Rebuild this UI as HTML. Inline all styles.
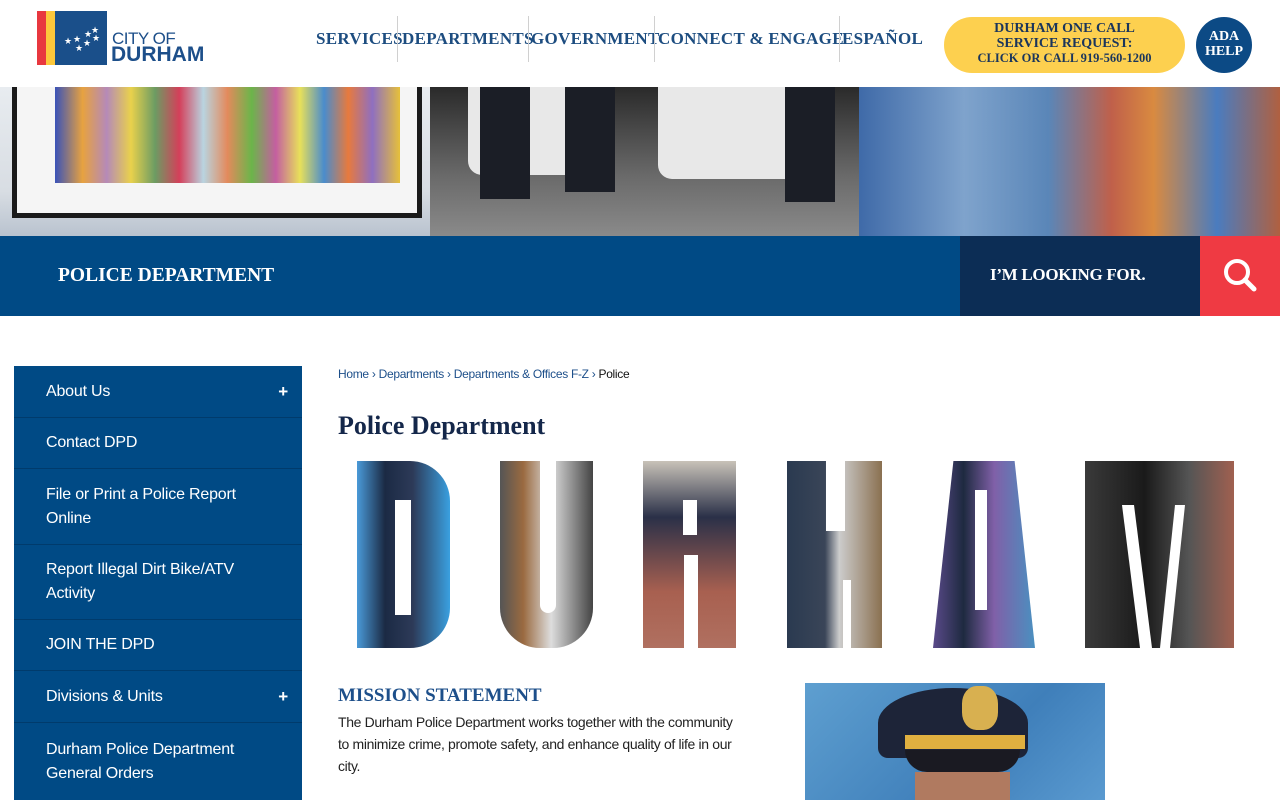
<!DOCTYPE html>
<html><head><meta charset="utf-8">
<style>
*{margin:0;padding:0;box-sizing:border-box}
body{width:1280px;height:800px;overflow:hidden;background:#fff;font-family:"Liberation Sans",sans-serif;position:relative}
.abs{position:absolute}
.nav{font-family:"Liberation Serif",serif;font-weight:bold;color:#1d4d80;font-size:17px;top:29px;letter-spacing:.3px}
.sep{top:16px;width:1px;height:46px;background:#d0d0d0}
.side{position:absolute;left:14px;top:366px;width:288px;background:#004a85}
.side div{color:#fff;font-size:16px;line-height:24px;padding:0 0 0 32px;border-bottom:1px solid #003b6c;display:flex;align-items:center;position:relative;letter-spacing:-.2px}
.side div b{position:absolute;right:14px;font-size:17px}
.L{position:absolute;top:461px;height:187px}
.w{position:absolute;background:#fff}
</style></head><body>
<!-- header -->
<div class="abs" style="left:37px;top:11px;width:9px;height:54px;background:#e8383f"></div>
<div class="abs" style="left:46px;top:11px;width:9px;height:54px;background:#fcc83c"></div>
<div class="abs" style="left:55px;top:11px;width:52px;height:54px;background:#1a4f8a"></div>
<svg class="abs" style="left:55px;top:11px" width="52" height="54" viewBox="0 0 52 54" fill="#fff">
<text x="36" y="22" font-size="9">★</text><text x="29" y="26" font-size="9">★</text><text x="37" y="30" font-size="9">★</text>
<text x="9" y="33" font-size="9">★</text><text x="18" y="31" font-size="9">★</text><text x="28" y="35" font-size="9">★</text><text x="20" y="40" font-size="9">★</text>
</svg>
<div class="abs" style="left:112px;top:31px;color:#1d4f8a;font-size:17px;letter-spacing:-.5px;line-height:16px">CITY OF</div>
<div class="abs" style="left:111px;top:45px;color:#1d4f8a;font-size:21px;font-weight:bold;letter-spacing:0;line-height:20px">DURHAM</div>
<div class="abs nav" style="left:316px">SERVICES</div>
<div class="abs sep" style="left:397px"></div>
<div class="abs nav" style="left:402px">DEPARTMENTS</div>
<div class="abs sep" style="left:528px"></div>
<div class="abs nav" style="left:531px">GOVERNMENT</div>
<div class="abs sep" style="left:654px"></div>
<div class="abs nav" style="left:658px">CONNECT &amp; ENGAGE</div>
<div class="abs sep" style="left:839px"></div>
<div class="abs nav" style="left:842px">ESPAÑOL</div>
<div class="abs" style="left:944px;top:17px;width:241px;height:56px;border-radius:28px;background:#fdd04f;color:#1a355c;font-family:'Liberation Serif',serif;font-weight:bold;text-align:center;font-size:14px;line-height:15px;padding-top:4px">DURHAM ONE CALL<br>SERVICE REQUEST:<br><span style="font-size:12.5px">CLICK OR CALL 919-560-1200</span></div>
<div class="abs" style="left:1196px;top:17px;width:56px;height:56px;border-radius:50%;background:#0c4a85;color:#fff;font-family:'Liberation Serif',serif;font-weight:bold;font-size:14px;line-height:15px;text-align:center;padding-top:12px">ADA<br>HELP</div>
<!-- hero -->
<div class="abs" style="left:0;top:87px;width:430px;height:149px;background:linear-gradient(180deg,#e8ecf0,#d8dde3 70%,#b9c3cf)"></div>
<div class="abs" style="left:12px;top:87px;width:410px;height:131px;background:#1a1a1a"></div>
<div class="abs" style="left:17px;top:87px;width:400px;height:126px;background:#f5f5f5"></div>
<div class="abs" style="left:55px;top:87px;width:345px;height:96px;background:linear-gradient(90deg,#3a52b8,#e7a240 8%,#b58ab8 15%,#e9d14c 22%,#6c9c63 29%,#d43f5a 36%,#b9d4e0 43%,#e38a5c 50%,#6bb54a 57%,#c45fa0 64%,#e8e05a 71%,#4a8ccc 78%,#e77a3e 85%,#8f6fc0 92%,#e6c03a)"></div>
<div class="abs" style="left:430px;top:87px;width:429px;height:149px;background:linear-gradient(180deg,#2a2a2a 0%,#555 40%,#6a6a6a 60%,#8a8a8a 100%)"></div>
<div class="abs" style="left:468px;top:87px;width:120px;height:88px;background:#e8e8e8;border-radius:0 0 14px 14px"></div>
<div class="abs" style="left:658px;top:87px;width:145px;height:92px;background:#e8e8e8;border-radius:0 0 14px 14px"></div>
<div class="abs" style="left:480px;top:87px;width:50px;height:112px;background:#1b1e26"></div>
<div class="abs" style="left:565px;top:87px;width:50px;height:105px;background:#1b1e26"></div>
<div class="abs" style="left:785px;top:87px;width:50px;height:115px;background:#1b1e26"></div>
<div class="abs" style="left:859px;top:87px;width:421px;height:149px;background:linear-gradient(90deg,#3f6aa8,#7fa3cc 25%,#5a86b8 45%,#c0604a 60%,#d98a40 70%,#4a7cbf 85%,#b06040)"></div>
<!-- banner -->
<div class="abs" style="left:0;top:236px;width:960px;height:80px;background:#004a85"></div>
<div class="abs" style="left:58px;top:265px;color:#fff;font-family:'Liberation Serif',serif;font-weight:bold;font-size:19.5px">POLICE DEPARTMENT</div>
<div class="abs" style="left:960px;top:236px;width:240px;height:80px;background:#0c2d55"></div>
<div class="abs" style="left:990px;top:265px;color:#fff;font-family:'Liberation Serif',serif;font-weight:bold;font-size:17px;letter-spacing:-.3px">I’M LOOKING FOR.</div>
<div class="abs" style="left:1200px;top:236px;width:80px;height:80px;background:#ef3a43"></div>
<svg class="abs" style="left:1220px;top:256px" width="40" height="40" viewBox="0 0 40 40"><circle cx="17" cy="16" r="11" fill="none" stroke="#fff" stroke-width="4"/><path d="M25 24 L34 33" stroke="#fff" stroke-width="5" stroke-linecap="round"/></svg>
<!-- sidebar -->
<div class="side">
<div style="height:52px">About Us<b>+</b></div>
<div style="height:51px">Contact DPD</div>
<div style="height:76px">File or Print a Police Report<br>Online</div>
<div style="height:75px">Report Illegal Dirt Bike/ATV<br>Activity</div>
<div style="height:51px">JOIN THE DPD</div>
<div style="height:52px">Divisions &amp; Units<b>+</b></div>
<div style="height:77px;border:none">Durham Police Department<br>General Orders</div>
</div>
<!-- content -->
<div class="abs" style="left:338px;top:367px;font-size:12px;color:#1d4f8a;letter-spacing:-.3px">Home › Departments › Departments &amp; Offices F-Z › <span style="color:#111">Police</span></div>
<div class="abs" style="left:338px;top:411px;font-family:'Liberation Serif',serif;font-weight:bold;font-size:26px;color:#14274a">Police Department</div>
<!-- DURHAM letters -->
<div class="L" style="left:357px;width:93px;background:linear-gradient(90deg,#4a9ad8,#1b2a44 30%,#2d3a58 60%,#3aa0e0);border-radius:0 40px 40px 0"></div>
<div class="w" style="left:395px;top:500px;width:16px;height:115px"></div>
<div class="L" style="left:500px;width:93px;background:linear-gradient(90deg,#555,#9a6a40 25%,#ddd 55%,#444);border-radius:0 0 40px 40px"></div>
<div class="w" style="left:540px;top:461px;width:16px;height:152px;border-radius:0 0 8px 8px"></div>
<div class="L" style="left:643px;width:93px;background:linear-gradient(180deg,#c8c2b8,#2a3048 30%,#a86050 70%,#b07060)"></div>
<div class="w" style="left:683px;top:500px;width:14px;height:35px"></div>
<div class="w" style="left:684px;top:555px;width:14px;height:93px"></div>
<div class="L" style="left:787px;width:95px;background:linear-gradient(90deg,#2a3a50,#3a4558 40%,#ccc 55%,#8a7050)"></div>
<div class="w" style="left:826px;top:461px;width:19px;height:70px"></div>
<div class="w" style="left:843px;top:580px;width:8px;height:68px"></div>
<div class="L" style="left:933px;width:102px;background:linear-gradient(90deg,#5a4a8a,#1e2a40 30%,#8060a8 60%,#4a90c0);clip-path:polygon(20% 0,80% 0,100% 100%,0 100%)"></div>
<div class="w" style="left:975px;top:490px;width:12px;height:120px"></div>
<div class="L" style="left:1085px;width:149px;background:linear-gradient(90deg,#3a3a3a,#1a1a1a 40%,#555 70%,#a06050)"></div>
<div class="w" style="left:1122px;top:505px;width:30px;height:143px;clip-path:polygon(0 0,40% 0,100% 100%,60% 100%)"></div>
<div class="w" style="left:1160px;top:505px;width:25px;height:143px;clip-path:polygon(60% 0,100% 0,40% 100%,0 100%)"></div>
<div class="abs" style="left:338px;top:685px;font-family:'Liberation Serif',serif;font-weight:bold;font-size:19px;color:#1d4f8a">MISSION STATEMENT</div>
<div class="abs" style="left:338px;top:711px;width:460px;font-size:14px;line-height:22px;color:#222;letter-spacing:-.35px;white-space:nowrap">The Durham Police Department works together with the community<br>to minimize crime, promote safety, and enhance quality of life in our<br>city.</div>
<div class="abs" style="left:805px;top:683px;width:300px;height:117px;background:linear-gradient(135deg,#5e9fd0,#3f7fba 60%,#5a9ad0)"></div>
<div class="abs" style="left:878px;top:688px;width:150px;height:70px;background:#1d2438;border-radius:50% 50% 10px 10px"></div>
<div class="abs" style="left:905px;top:735px;width:120px;height:14px;background:#e0b040"></div>
<div class="abs" style="left:905px;top:750px;width:115px;height:22px;background:#1a1a22;border-radius:0 0 40px 40px"></div>
<div class="abs" style="left:915px;top:772px;width:95px;height:28px;background:#b07a60"></div>
<div class="abs" style="left:962px;top:686px;width:36px;height:44px;background:#d8b050;border-radius:40%"></div>
</body></html>
